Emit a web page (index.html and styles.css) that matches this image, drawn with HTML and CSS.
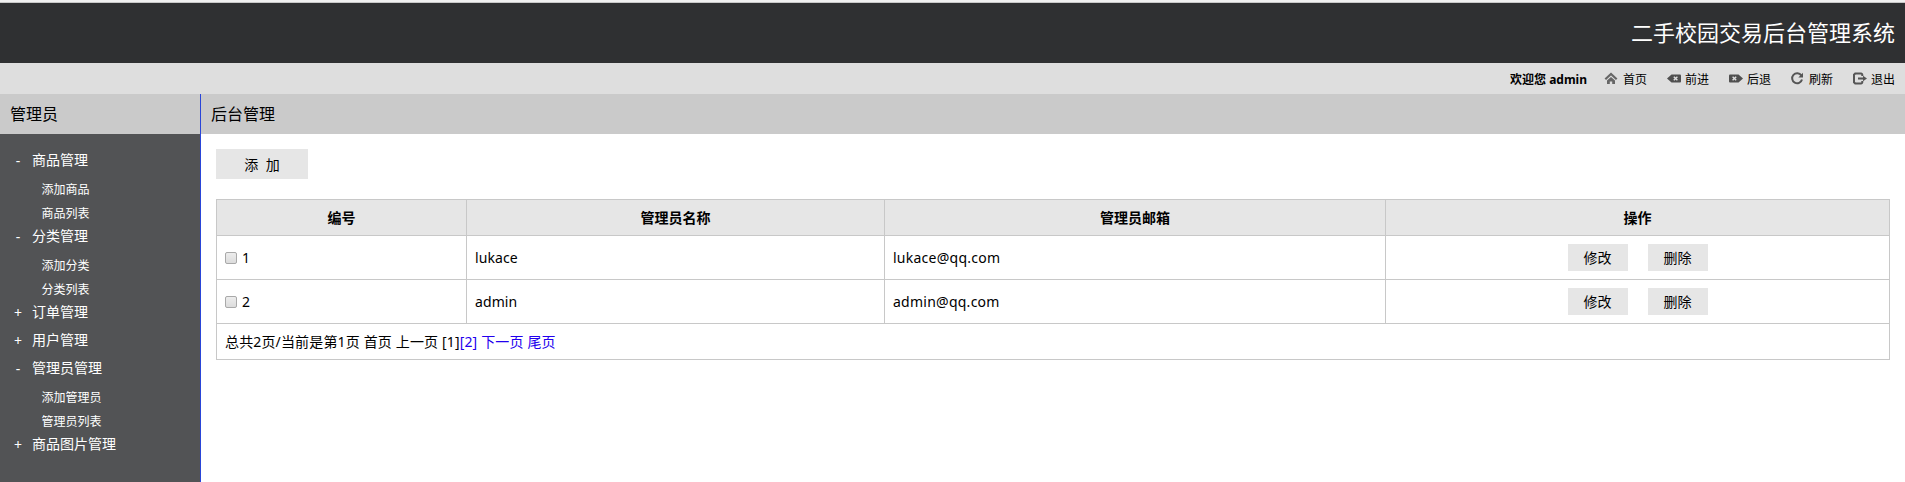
FILE: index.html
```html
<!DOCTYPE html>
<html lang="zh-CN">
<head>
<meta charset="utf-8">
<title>后台管理</title>
<link rel="stylesheet" href="styles.css">
</head>
<body>
<header class="head"><h1 class="logo">二手校园交易后台管理系统</h1></header>
<nav class="toolbar">
  <b class="welcome">欢迎您 admin</b>
  <a class="tool"><svg class="icon" viewBox="0 0 16 16"><path d="M2.300 8.200 8 3l5.700 5.200" fill="none" stroke="#666" stroke-width="2.200"/><path d="M4 9.400 8 5.900l4 3.500V13H9.200v-2.600H6.800V13H4z" fill="#666"/></svg>首页</a>
  <a class="tool"><svg class="icon" viewBox="0 0 16 16"><path d="M2 7.500 6.500 3.500H15a1 1 0 0 1 1 1v6a1 1 0 0 1-1 1H6.500z" fill="#505050"/><path d="m8.800 5.700 3.600 3.600m0-3.600-3.600 3.600" stroke="#dedede" stroke-width="1.400"/></svg>前进</a>
  <a class="tool"><svg class="icon" viewBox="0 0 16 16"><path d="M16 7.500l-4.500-4H3a1 1 0 0 0-1 1v6a1 1 0 0 0 1 1h8.500z" fill="#505050"/><path d="m5.600 5.700 3.600 3.600m0-3.600-3.600 3.600" stroke="#dedede" stroke-width="1.400"/></svg>后退</a>
  <a class="tool"><svg class="icon" viewBox="0 0 16 16"><path d="M12.300 4.400A5 5 0 1 0 13 8.500" fill="none" stroke="#555" stroke-width="2"/><path d="M14 1.700v4.700H9.300z" fill="#555"/></svg>刷新</a>
  <a class="tool"><svg class="icon" viewBox="0 0 16 16"><path d="M11.300 5V3.700A1.200 1.200 0 0 0 10.100 2.500H4.200L3 3.700v7.600l1.200 1.200h5.900a1.200 1.200 0 0 0 1.200-1.200V10M7 7.500h6" fill="none" stroke="#555" stroke-width="2"/><path d="M12 4.700 16 7.500l-4 2.800z" fill="#555"/></svg>退出</a>
</nav>
<div class="body">
  <aside class="side">
    <h2 class="title">管理员</h2>
    <div class="menu">
      <h3 class="group"><span class="sign">-</span>商品管理</h3>
      <a class="sub">添加商品</a>
      <a class="sub">商品列表</a>
      <h3 class="group"><span class="sign">-</span>分类管理</h3>
      <a class="sub">添加分类</a>
      <a class="sub">分类列表</a>
      <h3 class="group"><span class="sign">+</span>订单管理</h3>
      <h3 class="group"><span class="sign">+</span>用户管理</h3>
      <h3 class="group"><span class="sign">-</span>管理员管理</h3>
      <a class="sub">添加管理员</a>
      <a class="sub">管理员列表</a>
      <h3 class="group"><span class="sign">+</span>商品图片管理</h3>
    </div>
  </aside>
  <main class="main">
    <h2 class="title">后台管理</h2>
    <div class="content">
      <button class="btn add">添&nbsp;&nbsp;加</button>
      <table class="table">
        <colgroup><col class="c-id"><col class="c-name"><col class="c-mail"><col></colgroup>
        <thead><tr><th>编号</th><th>管理员名称</th><th>管理员邮箱</th><th>操作</th></tr></thead>
        <tbody>
          <tr class="row"><td><label class="pick"><span class="check"></span>1</label></td><td class="name">lukace</td><td class="mail">lukace@qq.com</td><td><div class="actions"><button class="btn">修改</button><button class="btn">删除</button></div></td></tr>
          <tr class="row"><td><label class="pick"><span class="check"></span>2</label></td><td class="name">admin</td><td class="mail">admin@qq.com</td><td><div class="actions"><button class="btn">修改</button><button class="btn">删除</button></div></td></tr>
          <tr class="pager"><td colspan="4">总共2页/当前是第1页 首页 上一页 [1]<a class="link">[2]</a> <a class="link">下一页</a> <a class="link">尾页</a></td></tr>
        </tbody>
      </table>
    </div>
  </main>
</div>
</body>
</html>
```
FILE: styles.css
```css
* { box-sizing: border-box; margin: 0; padding: 0; }
body {
  height: 482px;
  overflow: hidden;
  display: flex;
  flex-direction: column;
  border-top: 2px solid #f0f0f0;
  background: #fff;
  color: #000;
  font: 14px "Noto Sans", "Noto Sans CJK SC", sans-serif;
}
.head {
  height: 61px;
  padding-right: 10px;
  border-top: 1px solid #c8c8c8;
  background: #2f3032;
  text-align: right;
}
.logo { color: #fff; font-size: 22px; font-weight: 400; line-height: 59px; }
.toolbar {
  height: 31px;
  padding-right: 10px;
  background: #dedede;
  display: flex;
  justify-content: flex-end;
  align-items: center;
  gap: 18px;
  font-size: 12px;
}
.welcome { margin-right: -2px; }
.tool { width: 44px; display: flex; align-items: center; gap: 4px; white-space: nowrap; }
.icon { width: 16px; height: 16px; flex: none; }
.body { flex: 1; display: flex; }
.side { width: 201px; border-right: 1px solid #2945d8; background: #525355; color: #fff; }
.title { height: 40px; padding-left: 10px; background: #cacaca; color: #000; font-size: 16px; font-weight: 400; line-height: 41px; }
.menu { padding-top: 14px; }
.group { height: 28px; display: flex; font-size: 14px; font-weight: 400; line-height: 24px; }
.sign { width: 32px; padding: 1px 10px 0 14px; text-align: center; }
.sub { display: block; height: 24px; padding-left: 41.5px; font-size: 12px; line-height: 27px; }
.main { flex: 1; }
.content { padding: 15px 15px 0; }
.btn { width: 60px; height: 27px; border: 0; background: #e6e6e6; color: #000; font: inherit; line-height: 27px; }
.add { display: block; width: 92px; height: 30px; margin-bottom: 20px; line-height: 31px; }
.table { width: 1674px; border-collapse: collapse; table-layout: fixed; }
.c-id { width: 250px; }
.c-name { width: 418px; }
.c-mail { width: 501px; }
.table th, .table td { border: 1px solid #c8c8c8; padding: 0 8px; line-height: 20px; }
.table th { height: 36px; background: #e6e6e6; font-weight: 700; }
.table td { text-align: left; }
.table .name { letter-spacing: .1px; }
.table .mail { letter-spacing: .25px; }
.row { height: 44px; }
.pager { height: 36px; letter-spacing: .15px; }
.pick { display: flex; align-items: center; gap: 5px; }
.check { width: 12px; height: 12px; border: 1px solid #a9a9a9; border-radius: 2px; background: linear-gradient(#ededed, #dcdcdc); }
.actions { display: flex; justify-content: center; gap: 20px; }
.link { color: #2200ee; }
```
